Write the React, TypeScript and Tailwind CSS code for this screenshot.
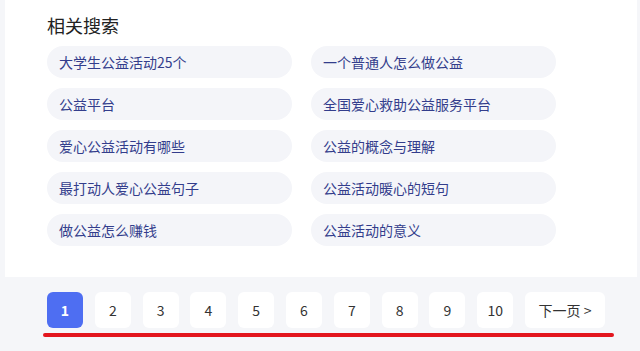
const related = [
  "大学生公益活动25个",
  "一个普通人怎么做公益",
  "公益平台",
  "全国爱心救助公益服务平台",
  "爱心公益活动有哪些",
  "公益的概念与理解",
  "最打动人爱心公益句子",
  "公益活动暖心的短句",
  "做公益怎么赚钱",
  "公益活动的意义",
];

const pages = [1, 2, 3, 4, 5, 6, 7, 8, 9, 10];

export default function App() {
  return (
    <div
      className="flex h-[351px] w-[640px] flex-col overflow-hidden bg-[#f5f6f9]"
      style={{ fontFamily: '"Noto Sans CJK SC", "Liberation Sans", sans-serif' }}
    >
      <div className="mx-[5px] mr-[3px] h-[277px] shrink-0 bg-white pl-[42px] pt-[12px]">
        <h2 className="text-[18px] leading-[26px] text-[#222]">相关搜索</h2>
        <div className="mt-[8px] grid w-[509px] grid-cols-[245px_245px] gap-x-[19px] gap-y-[10px]">
          {related.map((t) => (
            <div
              key={t}
              className="flex h-[32px] items-center rounded-full bg-[#f4f5f9] pl-[12px] text-[14px] text-[#333d8c]"
            >
              {t}
            </div>
          ))}
        </div>
      </div>
      <div className="relative flex-1">
        <div className="flex gap-[11.8px] pl-[47px] pt-[15px]">
          {pages.map((p) => (
            <div
              key={p}
              className={
                p === 1
                  ? "flex h-[36px] w-[36px] items-center justify-center rounded-[6px] bg-[#4e6ef2] text-[14px] font-bold text-white"
                  : "flex h-[36px] w-[36px] items-center justify-center rounded-[6px] bg-white text-[14px] text-[#333]"
              }
            >
              {p}
            </div>
          ))}
          <div className="flex h-[36px] w-[80px] items-center justify-center rounded-[6px] bg-white text-[14px] text-[#333]">
            下一页 &gt;
          </div>
        </div>
        <div className="absolute left-[43px] top-[56px] h-[4px] w-[571px] rounded-full bg-[#e3161e]" />
      </div>
    </div>
  );
}
